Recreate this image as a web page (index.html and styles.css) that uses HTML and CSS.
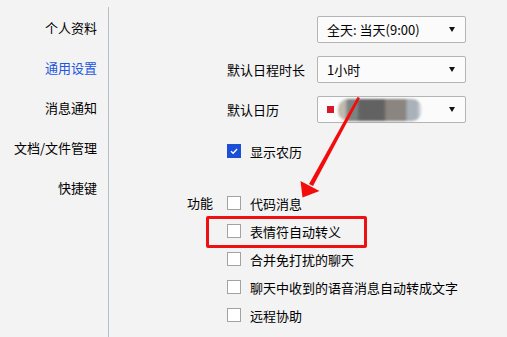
FILE: index.html
```html
<!DOCTYPE html>
<html lang="zh">
<head>
<meta charset="utf-8">
<link rel="stylesheet" href="styles.css">
</head>
<body>
<div class="app">
  <nav class="sidebar">
    <div class="nav-item">个人资料</div>
    <div class="nav-item active">通用设置</div>
    <div class="nav-item">消息通知</div>
    <div class="nav-item">文档/文件管理</div>
    <div class="nav-item">快捷键</div>
  </nav>
  <main class="main">
    <div class="form">
      <div class="label"></div>
      <div class="select"><span class="sel-text">全天: 当天(9:00)</span><span class="caret"></span></div>

      <div class="label">默认日程时长</div>
      <div class="select"><span class="sel-text">1小时</span><span class="caret"></span></div>

      <div class="label">默认日历</div>
      <div class="select"><span class="cal-dot"></span><span class="blur"></span><span class="caret"></span></div>
    </div>

    <label class="check-row lunar"><span class="box checked"><svg viewBox="0 0 14 14" width="14" height="14"><path d="M3.5 7.2 L6 9.6 L10.6 4.6" fill="none" stroke="#fff" stroke-width="1.5"/></svg></span><span>显示农历</span></label>

    <div class="features">
      <div class="feat-label">功能</div>
      <div class="feat-list">
        <label class="check-row"><span class="box"></span><span>代码消息</span></label>
        <label class="check-row"><span class="box"></span><span>表情符自动转义</span></label>
        <label class="check-row"><span class="box"></span><span>合并免打扰的聊天</span></label>
        <label class="check-row"><span class="box"></span><span>聊天中收到的语音消息自动转成文字</span></label>
        <label class="check-row"><span class="box"></span><span>远程协助</span></label>
      </div>
    </div>
  </main>
  <div class="highlight"></div>
  <svg class="arrow" width="507" height="337" viewBox="0 0 507 337">
    <polygon points="360,98 357.5,97 309,184 313,186" fill="#f20c0c"/>
    <polygon points="300.5,181 319.5,191 302.5,197.5" fill="#f20c0c"/>
  </svg>
</div>
</body>
</html>
```

FILE: styles.css
```css
* { box-sizing: border-box; }
html, body { margin: 0; padding: 0; }
body {
  background: #f3f3f3;
  font-family: "Noto Sans CJK SC", "Noto Sans", sans-serif;
  font-size: 13px;
  font-weight: 400;
  color: #000;
  width: 507px;
  height: 337px;
  overflow: hidden;
}
.app {
  position: relative;
  display: flex;
  height: 337px;
}
.sidebar {
  width: 109px;
  flex: none;
  display: flex;
  flex-direction: column;
  align-items: flex-end;
  padding: 18px 12px 0 0;
  gap: 20px;
  position: relative;
}
.sidebar::after {
  content: "";
  position: absolute;
  right: 0;
  top: 7px;
  bottom: 0;
  width: 1px;
  background: #b6c2cb;
}
.nav-item {
  height: 20px;
  line-height: 20px;
  white-space: nowrap;
}
.nav-item.active { color: #1f55e0; }
.main {
  flex: 1;
  padding-top: 16px;
}
.form {
  display: grid;
  grid-template-columns: 90px 149px;
  margin-left: 118px;
  row-gap: 13px;
  align-items: center;
}
.label { white-space: nowrap; }
.select {
  height: 27px;
  border: 1px solid #b4b4b4;
  border-radius: 2px;
  background: #fbfbfb;
  display: flex;
  align-items: center;
  padding: 0 9px;
}
.sel-text { flex: 1; white-space: nowrap; }
.caret {
  margin-left: auto;
  width: 0;
  height: 0;
  border-left: 3.5px solid transparent;
  border-right: 3.5px solid transparent;
  border-top: 5px solid #111;
  margin-right: 1px;
}
.cal-dot {
  width: 7px;
  height: 7px;
  background: #d9172a;
  flex: none;
}
.blur {
  width: 84px;
  height: 22px;
  margin-left: 4px;
  border-radius: 10px;
  background: linear-gradient(90deg, #c1b9ae 0%, #c1b9ae 8%, #7c8483 12%, #7c8483 22%, #626262 26%, #626262 54%, #8a8580 58%, #8a8580 80%, #a9b1b9 83%, #a9b1b9 94%, #f0f0f0 100%);
  filter: blur(1px);
}
.check-row {
  display: flex;
  align-items: center;
  gap: 9px;
  height: 28px;
  white-space: nowrap;
}
.lunar {
  margin: 14px 0 0 118px;
}
.box {
  width: 14px;
  height: 14px;
  border: 1px solid #a2a2a2;
  background: #fff;
  flex: none;
  display: flex;
  align-items: center;
  justify-content: center;
}
.box.checked {
  background: #1a4fd6;
  border-color: #1a4fd6;
}
.box svg { display: block; }
.features {
  display: flex;
  margin-top: 24px;
}
.feat-label {
  width: 118px;
  flex: none;
  text-align: right;
  padding-right: 14px;
  height: 28px;
  line-height: 28px;
}
.feat-list {
  display: flex;
  flex-direction: column;
}
.highlight {
  position: absolute;
  left: 206px;
  top: 216px;
  width: 161px;
  height: 32px;
  border: 3px solid #ee1111;
  border-radius: 2px;
}
.arrow {
  position: absolute;
  left: 0;
  top: 0;
  pointer-events: none;
}
```
